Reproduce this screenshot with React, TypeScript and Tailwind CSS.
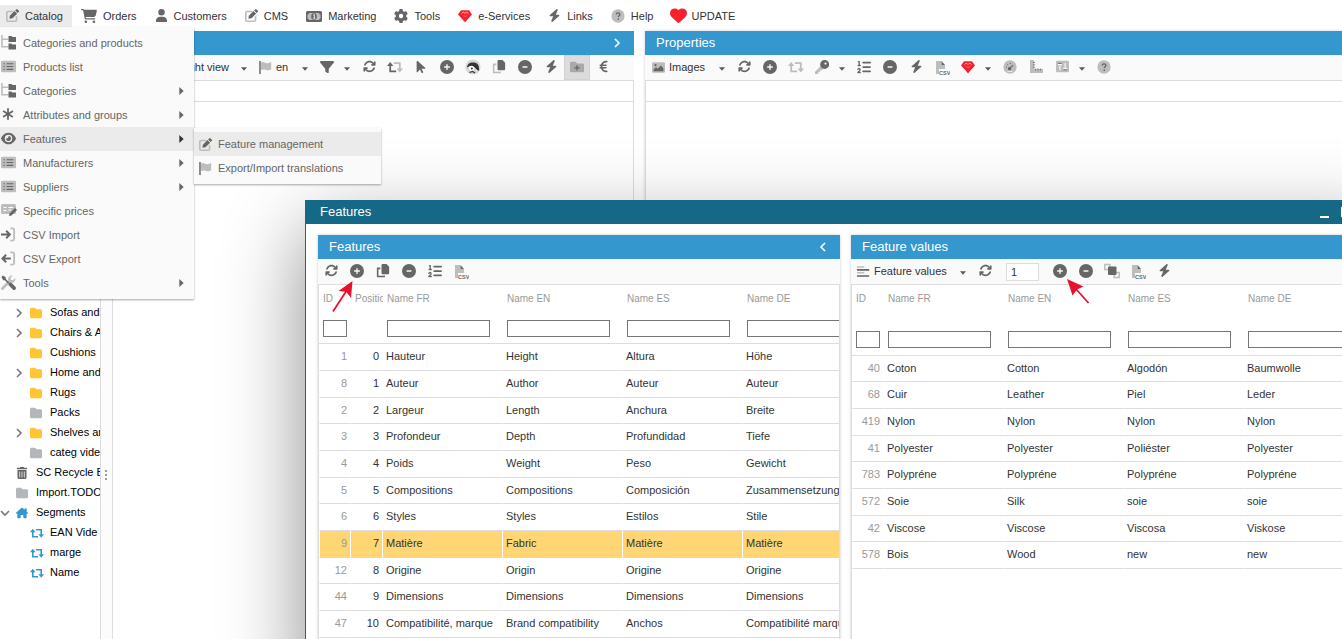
import React from "react";
import {
  FaAsterisk,
  FaArrowPointer,
  FaArrowsRotate,
  FaBolt,
  FaCartShopping,
  FaCircleMinus,
  FaCirclePlus,
  FaEuroSign,
  FaEye,
  FaFilter,
  FaFolder,
  FaGear,
  FaHeart,
  FaHouseChimney,
  FaListOl,
  FaTrashCan,
  FaUser,
} from "react-icons/fa6";

type Children = { children?: React.ReactNode };

/* ---------- two-tone icons, drawn on a 16 unit grid ---------- */

const DARK = "#666666";
const LIGHT = "#bdbdbd";

function Svg({ size = 14, children }: Children & { size?: number }) {
  return (
    <svg width={size} height={size} viewBox="0 0 16 16" fill="none" aria-hidden="true" className="shrink-0">
      {children}
    </svg>
  );
}

const EditIcon = () => (
  <Svg size={13}>
    <path d="M9 3H2.600A1.600 1.600 0 0 0 1 4.600v8.800A1.600 1.600 0 0 0 2.600 15h8.800a1.600 1.600 0 0 0 1.600-1.600V9" stroke={LIGHT} strokeWidth="2" />
    <path d="M4.200 12.100l.5-3.800 5.700-5.800 3.300 3.300-5.700 5.700z" fill={DARK} />
    <path d="M11.200 1.800l1.300-1.300a1.200 1.200 0 0 1 1.700 0l1.400 1.400a1.200 1.200 0 0 1 0 1.700L14.300 4.900z" fill={DARK} />
  </Svg>
);

const MoneyIcon = () => (
  <svg width="16" height="14" viewBox="0 0 16 14" aria-hidden="true">
    <rect x="0" y="2" width="16" height="11" rx="1.500" fill={DARK} />
    <path d="M3 4h10a1.500 1.500 0 0 0 1.500 1.500v4A1.500 1.500 0 0 0 13 11H3a1.500 1.500 0 0 0-1.500-1.500v-4A1.500 1.500 0 0 0 3 4z" fill={LIGHT} />
    <ellipse cx="8" cy="7.500" rx="2.800" ry="3.200" fill={DARK} />
    <path d="M7.300 6.200l1-.6v3.500M7.200 9.200h2" stroke="#fff" strokeWidth=".9" fill="none" />
  </svg>
);

const GemIcon = ({ size = 14 }: { size?: number }) => (
  <Svg size={size}>
    <path d="M3.400 1.500h9.200L16 6.300 8 15 0 6.300z" fill="#f8202c" />
    <path d="M4 5.300l1.800-1.800L8 5l2.200-1.500L12 5.300" stroke="#fff" strokeWidth=".7" />
    <path d="M5.400 7.500L8 8.500l2.600-1" stroke="#ff9aa0" strokeWidth=".6" />
  </Svg>
);

const HelpIcon = () => (
  <Svg size={14}>
    <circle cx="8" cy="8" r="7.600" fill={LIGHT} />
    <path d="M6 6.300c0-1.200.9-1.900 2.100-1.900s2.100.7 2.100 1.800c0 1.400-1.900 1.500-1.900 2.900" stroke={DARK} strokeWidth="1.500" />
    <circle cx="8.300" cy="11.500" r="1" fill={DARK} />
  </Svg>
);

const TreeIcon = () => (
  <Svg size={15}>
    <path d="M1 0v12.500h7M1 4.500h7" stroke={LIGHT} strokeWidth="1.700" />
    <path d="M8 1h3.200l1 1H16v5.500H8zM8 9h3.200l1 1H16v5.500H8z" fill={DARK} />
  </Svg>
);

const ListIcon = () => (
  <Svg size={15}>
    <rect x="0" y="1.800" width="16" height="12.400" rx="1.500" fill={LIGHT} />
    <path d="M6 5h7M6 8h7M6 11h7" stroke={DARK} strokeWidth="1.200" />
    <path d="M2.600 5H4M2.600 8H4M2.600 11H4" stroke={DARK} strokeWidth="1.200" />
  </Svg>
);

const PriceIcon = () => (
  <Svg size={16}>
    <rect x="0" y="2" width="15" height="10" rx="1.500" fill={LIGHT} />
    <path d="M2.500 5.500h2.800M2.500 8.500h2.800M7.500 5.500H12M7.500 8h2.500" stroke="#fff" strokeWidth="1.200" />
    <path d="M8 14l.5-2.500L14 6l2 2-5.500 5.500z" fill={DARK} />
  </Svg>
);

const ImportIcon = () => (
  <Svg size={15}>
    <path d="M10 1.500h2.400A1.600 1.600 0 0 1 14 3.100v9.800a1.600 1.600 0 0 1-1.600 1.600H10" stroke={LIGHT} strokeWidth="2" />
    <path d="M0 8h9M5.500 4l4 4-4 4" stroke={DARK} strokeWidth="2" />
  </Svg>
);

const ExportIcon = () => (
  <Svg size={15}>
    <path d="M10 1.500h2.400A1.600 1.600 0 0 1 14 3.100v9.800a1.600 1.600 0 0 1-1.600 1.600H10" stroke={LIGHT} strokeWidth="2" />
    <path d="M1.500 8h9M5.500 4l-4 4 4 4" stroke={DARK} strokeWidth="2" />
  </Svg>
);

const ToolsIcon = () => (
  <Svg size={15}>
    <path d="M1.500 14.500l7-7" stroke={LIGHT} strokeWidth="3" strokeLinecap="round" />
    <path d="M15.200 3.200l-2.400 2.300-2.300-.4-.4-2.200L12.500.6a4.200 4.200 0 0 0-4.800 5.300l2.400 2.400a4.200 4.200 0 0 0 5.100-5.100z" fill={LIGHT} />
    <path d="M.5 2L2 .5l3 2 .1 1.800 3.700 3.700-1.300 1.300-3.400-3.700-1.800-.1z" fill={DARK} />
    <path d="M10 10l4 4" stroke={DARK} strokeWidth="3.800" strokeLinecap="round" />
  </Svg>
);

const FlagIcon = () => (
  <Svg size={13}>
    <path d="M2.500 2c3-2 5 1.500 8 .7 1.500-.3 3-.8 4.500-1.500v9.300c-3 1.500-5 1-7 .3s-3.500-.5-5.500.4z" fill={LIGHT} />
    <path d="M1.200 0v16" stroke={DARK} strokeWidth="1.800" />
  </Svg>
);

const SwapIcon = ({ first = DARK, second = LIGHT, size = 16 }: { first?: string; second?: string; size?: number }) => (
  <Svg size={size}>
    <path d="M9.200 12.300H3.200V5.500" stroke={first} strokeWidth="1.800" />
    <path d="M0 7l3.200-4 3.200 4z" fill={first} />
    <path d="M6.800 4.200h6v6.500" stroke={second} strokeWidth="1.800" />
    <path d="M9.600 9.500H16l-3.200 4z" fill={second} />
  </Svg>
);

const PrestaIcon = () => (
  <Svg size={16}>
    <circle cx="8" cy="8" r="7.600" fill="#d6d6d6" />
    <path d="M2 8.500C2.500 4 6 3 9 3.500c4 .5 5.500 3.500 5 8l-3-.5-1.500-3L5 7z" fill="#333" />
    <circle cx="6.500" cy="9.300" r="2.600" fill="#fff" />
    <circle cx="6.900" cy="9.500" r="1" fill="#333" />
    <path d="M4.500 13.500l3-1 2.500 1.500M12 9l2 2" stroke="#333" strokeWidth="1.300" />
    <path d="M10.500 9.500l1.500 2.500" stroke="#fff" strokeWidth="1" />
  </Svg>
);

const CopyIcon = ({ back = LIGHT }: { back?: string }) => (
  <Svg size={14}>
    <path d="M5 5H1.900v9.200h7.400V13" stroke={back} strokeWidth="1.800" />
    <path d="M7.500 0H12l3 3v7.500a1.200 1.200 0 0 1-1.200 1.200H7.500a1.200 1.200 0 0 1-1.200-1.200V1.200A1.200 1.200 0 0 1 7.500 0z" fill={DARK} />
  </Svg>
);

const FolderPlusIcon = () => (
  <Svg size={14}>
    <path d="M1.500 2h4.700l2 2h6.300A1.500 1.500 0 0 1 16 5.500v7a1.500 1.500 0 0 1-1.500 1.500h-13A1.500 1.500 0 0 1 0 12.500v-9A1.500 1.500 0 0 1 1.500 2z" fill="#a9a9a9" />
    <path d="M8 6v6M5 9h6" stroke={DARK} strokeWidth="1.500" />
  </Svg>
);

const ImageIcon = () => (
  <Svg size={13}>
    <rect x="0" y="1.500" width="16" height="13" rx="1.500" fill={LIGHT} />
    <path d="M2 12.500V10.500L5 7.500l2 2 4-4 3 3.500v3.500z" fill={DARK} />
    <circle cx="4.300" cy="5" r="1.400" fill={DARK} />
  </Svg>
);

const KeyIcon = () => (
  <Svg size={14}>
    <path d="M7.500 6L0 13.500V16h3.500v-2h2v-2h2L10 9z" fill={LIGHT} />
    <path fillRule="evenodd" d="M11 0a5 5 0 1 1 0 10.200A5 5 0 0 1 11 0zm1 2.800a1.300 1.300 0 1 0 0 2.600 1.300 1.300 0 0 0 0-2.600z" fill={DARK} />
  </Svg>
);

const CsvIcon = () => (
  <svg width="16" height="15" viewBox="0 0 16 15" aria-hidden="true" className="mt-px">
    <path d="M2 1h5.500v4H11v4H5v5H2z" fill={LIGHT} />
    <path d="M7.500 1L11 5H7.500z" fill={DARK} />
    <text x="5" y="14.500" fontSize="5.500" fontWeight="700" fontFamily="Liberation Sans" fill={DARK}>CSV</text>
  </svg>
);

const GaugeIcon = () => (
  <Svg size={14}>
    <circle cx="8" cy="8" r="7.600" fill={LIGHT} />
    <path d="M7.500 9.500L11.500 6M3.500 8h1M5 4.800l.6.6M8.500 3.500v1" stroke={DARK} strokeWidth="1.200" />
    <circle cx="7.500" cy="10" r="2" fill={DARK} />
    <path d="M5 13h6" stroke="#eee" strokeWidth="1" />
  </Svg>
);

const RulerIcon = () => (
  <Svg size={13}>
    <path d="M0 0h5v11h11v5H0z" fill={LIGHT} />
    <path d="M3.500 3H6M3.500 6H6M3.500 9H6M7 10.500V13M10 10.500V13M13 10.500V13" stroke={DARK} strokeWidth="1" />
  </Svg>
);

const SlidersIcon = () => (
  <Svg size={13}>
    <rect x="0" y="1" width="16" height="14" rx="1.500" fill={LIGHT} />
    <path d="M2.500 6.500V4H7v2.500zM9 12V9.500h4.500V12z" fill="#fff" />
    <path d="M4.800 7v5.500M11.200 9V4" stroke="#fff" strokeWidth="1.300" />
    <path d="M2.500 4.200H7M9 12h4.500" stroke={DARK} strokeWidth="1.200" />
  </Svg>
);

const LinesIcon = () => (
  <Svg size={13}>
    <path d="M0 2.500h9M0 9.500h9" stroke={LIGHT} strokeWidth="1.900" />
    <path d="M0 6h15M0 13.500h15" stroke={DARK} strokeWidth="1.900" />
  </Svg>
);

const LayersIcon = () => (
  <Svg size={16}>
    <path d="M.8 1.500h5v5h-5zM10.200 9.500h5v5h-5z" stroke={LIGHT} strokeWidth="1.500" />
    <rect x="4" y="3.500" width="8.500" height="8.500" rx="1" fill={DARK} />
  </Svg>
);

const Chevron = ({ d }: { d: string }) => (
  <svg width="10" height="10" viewBox="0 0 10 10" fill="none" stroke="currentColor" strokeWidth="1.600" aria-hidden="true">
    <path d={d} />
  </svg>
);
const RIGHT = "M3 1l4 4-4 4";
const LEFT = "M7 1L3 5l4 4";
const DOWN = "M1 3l4 4 4-4";

/* ---------- toolbar parts ---------- */

function Tool({ label, children, active = false }: Children & { label: string; active?: boolean }) {
  return (
    <button
      type="button"
      aria-label={label}
      className={
        "flex w-[26px] shrink-0 items-center justify-center self-stretch pb-[2px] text-[14px] text-[#666] " +
        (active ? "border border-[#d2d2d2] bg-[#dcdcdc]" : "")
      }
    >
      {children}
    </button>
  );
}

function Caret({ label }: { label: string }) {
  return (
    <button type="button" aria-label={label} className="flex w-4 shrink-0 items-center justify-start self-stretch pt-[2px] pl-1">
      <svg width="6" height="4" viewBox="0 0 6 4" aria-hidden="true">
        <path d="M0 .3h6L3 3.700z" fill="#4c5c68" />
      </svg>
    </button>
  );
}

function Toolbar({ children }: Children) {
  return <div className="flex h-[25px] shrink-0 items-center overflow-hidden bg-[#fafafa]">{children}</div>;
}

function PanelTitle({ title, chevron }: { title: string; chevron?: string }) {
  return (
    <header className="flex h-6 shrink-0 items-center justify-between bg-[#3498ce] pr-3 pl-[11px] text-white">
      <h2 className="text-[13px] leading-6">{title}</h2>
      {chevron && (
        <button type="button" aria-label={"Toggle panel " + title}>
          <Chevron d={chevron} />
        </button>
      )}
    </header>
  );
}

/* ---------- menus ---------- */

const topMenu = [
  { label: "Orders", icon: <FaCartShopping size={16} /> },
  { label: "Customers", icon: <FaUser size={13} /> },
  { label: "CMS", icon: <EditIcon /> },
  { label: "Marketing", icon: <MoneyIcon /> },
  { label: "Tools", icon: <FaGear size={14} /> },
  { label: "e-Services", icon: <GemIcon /> },
  { label: "Links", icon: <FaBolt size={13} /> },
  { label: "Help", icon: <HelpIcon /> },
];

function MenuBar() {
  return (
    <nav className="flex h-[31px] shrink-0 items-center whitespace-nowrap text-[#333]">
      <a href="#catalog" className="flex h-[22px] items-center gap-[6px] bg-[#ebebeb] pr-[9px] pl-[6px]">
        <EditIcon />
        Catalog
      </a>
      {topMenu.map((m) => (
        <a key={m.label} href={"#" + m.label} className="flex h-[22px] items-center gap-[6px] px-[9px]">
          <span className="text-[#666]">{m.icon}</span>
          {m.label}
        </a>
      ))}
      <a href="#update" className="flex h-[22px] items-center gap-1 px-2">
        <FaHeart size={17} color="#f8202c" />
        UPDATE
      </a>
    </nav>
  );
}

const catalogMenu = [
  { label: "Categories and products", icon: <TreeIcon /> },
  { label: "Products list", icon: <ListIcon /> },
  { label: "Categories", icon: <TreeIcon />, sub: true },
  { label: "Attributes and groups", icon: <FaAsterisk size={14} />, sub: true },
  { label: "Features", icon: <FaEye size={15} />, sub: true, active: true },
  { label: "Manufacturers", icon: <ListIcon />, sub: true },
  { label: "Suppliers", icon: <ListIcon />, sub: true },
  { label: "Specific prices", icon: <PriceIcon /> },
  { label: "CSV Import", icon: <ImportIcon /> },
  { label: "CSV Export", icon: <ExportIcon /> },
  { label: "Tools", icon: <ToolsIcon />, sub: true },
];

function CatalogMenu() {
  return (
    <ul className="absolute top-[27px] left-0 w-[194px] bg-[#fafafa] py-1 text-[#666] shadow-[0_1px_2px_rgba(0,0,0,0.35)]">
      {catalogMenu.map((m) => (
        <li key={m.label}>
          <a href={"#" + m.label} className={"flex h-6 items-center pr-[10px] " + (m.active ? "bg-[#ebebeb]" : "")}>
            <span className="flex w-[23px] shrink-0 items-center pb-[2px] pl-px">{m.icon}</span>
            <span className="flex-1">{m.label}</span>
            {m.sub && (
              <svg width="5" height="8" viewBox="0 0 5 8" aria-hidden="true">
                <path d="M.3 0L4.700 4 .3 8z" fill={m.active ? "#333" : "#666"} />
              </svg>
            )}
          </a>
        </li>
      ))}
    </ul>
  );
}

function FeaturesSubmenu() {
  return (
    <ul className="absolute top-[128px] left-[194px] w-[187px] bg-[#fafafa] py-1 text-[#666] shadow-[0_1px_2px_rgba(0,0,0,0.35)]">
      <li>
        <a href="#manage" className="flex h-6 items-center gap-[6px] bg-[#ebebeb] pl-[5px]">
          <EditIcon />
          Feature management
        </a>
      </li>
      <li>
        <a href="#translations" className="flex h-6 items-center gap-[6px] pl-[5px]">
          <FlagIcon />
          Export/Import translations
        </a>
      </li>
    </ul>
  );
}

/* ---------- category tree ---------- */

const yellow = <FaFolder size={12} color="#ffc533" />;
const grey = <FaFolder size={12} color="#b3b6ba" />;
const segment = <SwapIcon first="#3498ce" second="#3498ce" size={14} />;

const tree = [
  { label: "Sofas and", icon: yellow, nested: true, chevron: RIGHT },
  { label: "Chairs & Armchairs", icon: yellow, nested: true, chevron: RIGHT },
  { label: "Cushions", icon: yellow, nested: true },
  { label: "Home and", icon: yellow, nested: true, chevron: RIGHT },
  { label: "Rugs", icon: yellow, nested: true },
  { label: "Packs", icon: grey, nested: true },
  { label: "Shelves and", icon: yellow, nested: true, chevron: RIGHT },
  { label: "categ vide", icon: grey, nested: true },
  { label: "SC Recycle Bin", icon: <FaTrashCan size={12} color="#666" /> },
  { label: "Import.TODO", icon: grey },
  { label: "Segments", icon: <FaHouseChimney size={12} color="#3498ce" />, chevron: DOWN },
  { label: "EAN Vide", icon: segment, nested: true },
  { label: "marge", icon: segment, nested: true },
  { label: "Name", icon: segment, nested: true },
];

function TreePanel() {
  return (
    <aside className="flex w-[101px] shrink-0 flex-col overflow-hidden border-r border-[#ddd]">
      <PanelTitle title="" />
      <Toolbar />
      <ul className="pt-[222px] text-black">
        {tree.map((t) => (
          <li key={t.label} className={"flex h-5 items-center whitespace-nowrap " + (t.nested ? "pl-[14px]" : "")}>
            <span className="flex w-4 shrink-0 pt-px text-[#777]">{t.chevron && <Chevron d={t.chevron} />}</span>
            <span className="w-5 shrink-0 pt-[2px]">{t.icon}</span>
            {t.label}
          </li>
        ))}
      </ul>
    </aside>
  );
}

/* ---------- background panels ---------- */

function ProductsPanel() {
  return (
    <section className="flex min-w-0 flex-1 flex-col">
      <PanelTitle title="" chevron={RIGHT} />
      <Toolbar>
        <button type="button" className="flex w-[125px] shrink-0 justify-end pr-2 pb-px text-[#333]">Light view</button>
        <Caret label="View options" />
        <button type="button" className="flex w-[45px] shrink-0 items-center gap-1 pb-px pl-[6px] text-[#333]">
          <FlagIcon />
          en
        </button>
        <Caret label="Languages" />
        <Tool label="Filter"><FaFilter size={14} /></Tool>
        <Caret label="Filter options" />
        <Tool label="Refresh"><FaArrowsRotate size={13} /></Tool>
        <Tool label="Synchronise"><SwapIcon /></Tool>
        <Tool label="Select"><FaArrowPointer /></Tool>
        <Tool label="Add"><FaCirclePlus /></Tool>
        <Tool label="Add in PrestaShop"><PrestaIcon /></Tool>
        <Tool label="Duplicate"><CopyIcon /></Tool>
        <Tool label="Delete"><FaCircleMinus /></Tool>
        <Tool label="Quick actions"><FaBolt size={13} /></Tool>
        <Tool label="Add to category" active><FolderPlusIcon /></Tool>
        <Tool label="Currency"><FaEuroSign size={13} /></Tool>
      </Toolbar>
      <div className="flex-1 border border-b-0 border-[#ddd]">
        <div className="h-[21px] border-b border-[#ddd]" />
      </div>
    </section>
  );
}

function PropertiesPanel() {
  return (
    <section className="flex min-w-0 flex-1 flex-col shadow-[0_0_3px_rgba(0,0,0,0.2)]">
      <PanelTitle title="Properties" />
      <Toolbar>
        <button type="button" className="flex w-[70px] shrink-0 items-center gap-1 pb-px pl-[7px] text-[#333]">
          <ImageIcon />
          Images
        </button>
        <Caret label="Property groups" />
        <Tool label="Refresh"><FaArrowsRotate size={13} /></Tool>
        <Tool label="Add"><FaCirclePlus /></Tool>
        <Tool label="Synchronise"><SwapIcon first={LIGHT} /></Tool>
        <Tool label="Keys"><KeyIcon /></Tool>
        <Caret label="Key options" />
        <Tool label="Positions"><FaListOl size={14} /></Tool>
        <Tool label="Delete"><FaCircleMinus /></Tool>
        <Tool label="Quick actions"><FaBolt size={13} /></Tool>
        <Tool label="Export CSV"><CsvIcon /></Tool>
        <Tool label="e-Services"><GemIcon size={14} /></Tool>
        <Caret label="e-Services options" />
        <Tool label="Performance"><GaugeIcon /></Tool>
        <Tool label="Dimensions"><RulerIcon /></Tool>
        <Tool label="Layout"><SlidersIcon /></Tool>
        <Caret label="Layout options" />
        <Tool label="Help"><HelpIcon /></Tool>
      </Toolbar>
      <div className="flex-1 border-t border-l border-[#ddd] bg-white">
        <div className="h-[21px] border-b border-[#ddd]" />
      </div>
    </section>
  );
}

/* ---------- features window ---------- */

const languages = ["Name FR", "Name EN", "Name ES", "Name DE"];

const features: [number, string[]][] = [
  [1, ["Hauteur", "Height", "Altura", "Höhe"]],
  [8, ["Auteur", "Author", "Auteur", "Auteur"]],
  [2, ["Largeur", "Length", "Anchura", "Breite"]],
  [3, ["Profondeur", "Depth", "Profundidad", "Tiefe"]],
  [4, ["Poids", "Weight", "Peso", "Gewicht"]],
  [5, ["Compositions", "Compositions", "Composición", "Zusammensetzung"]],
  [6, ["Styles", "Styles", "Estilos", "Stile"]],
  [9, ["Matière", "Fabric", "Matière", "Matière"]],
  [12, ["Origine", "Origin", "Origine", "Origine"]],
  [44, ["Dimensions", "Dimensions", "Dimensions", "Dimensions"]],
  [47, ["Compatibilité, marque", "Brand compatibility", "Anchos", "Compatibilité marque"]],
];

const values: [number, string[]][] = [
  [40, ["Coton", "Cotton", "Algodón", "Baumwolle"]],
  [68, ["Cuir", "Leather", "Piel", "Leder"]],
  [419, ["Nylon", "Nylon", "Nylon", "Nylon"]],
  [41, ["Polyester", "Polyester", "Poliéster", "Polyester"]],
  [783, ["Polypréne", "Polypréne", "Polypréne", "Polypréne"]],
  [572, ["Soie", "Silk", "soie", "soie"]],
  [42, ["Viscose", "Viscose", "Viscosa", "Viskose"]],
  [578, ["Bois", "Wood", "new", "new"]],
];

function Grid({
  rows,
  positions = false,
  selected,
  filterCell,
  rowHeight,
}: {
  rows: [number, string[]][];
  positions?: boolean;
  selected?: number;
  filterCell: string;
  rowHeight: string;
}) {
  const cell = "border-r border-b border-r-white pt-0 pb-[2px] ";
  const filterInput = "block h-[17px] border border-[#767676] bg-white px-1 ";
  return (
    <div className="flex-1 overflow-hidden border border-[#ddd] bg-white">
      <table className={"table-fixed border-separate border-spacing-0 whitespace-nowrap " + (positions ? "w-[544px]" : "w-[512px]")}>
        <colgroup>
          <col className="w-8" />
          {positions && <col className="w-8" />}
          {languages.map((l) => (
            <col key={l} className="w-[120px]" />
          ))}
        </colgroup>
        <thead className="text-left text-[10px] text-[#999]">
          <tr className="h-[29px]">
            <th className="overflow-hidden pt-0 pr-0 pb-[2px] pl-1 font-normal">ID</th>
            {positions && <th className="overflow-hidden pt-0 pr-0 pb-[2px] pl-1 font-normal">Position</th>}
            {languages.map((l) => (
              <th key={l} className="pt-0 pr-0 pb-[2px] pl-1 font-normal">{l}</th>
            ))}
          </tr>
          <tr>
            <td className={"border-b border-[#ddd] px-1 " + filterCell}>
              <input aria-label="Filter ID" className={filterInput + "w-6"} />
            </td>
            {positions && <td className="border-b border-[#ddd] p-0" />}
            {languages.map((l) => (
              <td key={l} className={"border-b border-[#ddd] px-1 " + filterCell}>
                <input aria-label={"Filter " + l} className={filterInput + "w-[103px]"} />
              </td>
            ))}
          </tr>
        </thead>
        <tbody>
          {rows.map(([id, names], i) => {
            const tone = id === selected ? "border-b-[#ffd673] bg-[#ffd673] " : "border-b-[#ddd] ";
            return (
              <tr key={id} className={rowHeight}>
                <td className={cell + tone + "border-l border-l-white pr-[3px] pl-0 text-right text-[#999]"}>{id}</td>
                {positions && <td className={cell + tone + "pr-[3px] pl-0 text-right"}>{i}</td>}
                {names.map((n, k) => (
                  <td key={k} className={cell + tone + "pr-0 pl-[3px]"}>{n}</td>
                ))}
              </tr>
            );
          })}
        </tbody>
      </table>
    </div>
  );
}

function FeaturesWindow() {
  return (
    <section className="absolute top-[200px] -right-[50px] -bottom-10 left-[305px] flex flex-col border-l border-[#166887] bg-white shadow-[0_30px_75px_rgba(0,0,0,0.45)]">
      <header className="flex h-6 shrink-0 items-center gap-3 bg-[#166887] pr-[17px] pl-[14px] text-white">
        <h1 className="flex-1 text-[13px]">Features</h1>
        <button type="button" aria-label="Minimise" className="h-3 w-[9px] border-b-2 border-white" />
        <button type="button" aria-label="Maximise" className="h-[10px] w-[10px] border border-t-2 border-white" />
        <button type="button" aria-label="Close" className="w-3 leading-3">×</button>
      </header>

      <div className="flex min-h-0 flex-1 gap-[11px] pt-[11px] pr-3 pl-3">
        <section className="flex w-[522px] shrink-0 flex-col shadow-[0_0_3px_rgba(0,0,0,0.2)]">
          <PanelTitle title="Features" chevron={LEFT} />
          <Toolbar>
            <Tool label="Refresh"><FaArrowsRotate size={13} /></Tool>
            <Tool label="Add feature"><FaCirclePlus /></Tool>
            <Tool label="Duplicate"><CopyIcon back={DARK} /></Tool>
            <Tool label="Delete"><FaCircleMinus /></Tool>
            <Tool label="Positions"><FaListOl size={14} /></Tool>
            <Tool label="Export CSV"><CsvIcon /></Tool>
          </Toolbar>
          <Grid rows={features} positions selected={9} filterCell="pt-[6px] pb-[6px]" rowHeight="h-[27px] nth-[3n]:h-[26px]" />
        </section>

        <section className="flex min-w-0 flex-1 flex-col shadow-[0_0_3px_rgba(0,0,0,0.2)]">
          <PanelTitle title="Feature values" />
          <Toolbar>
            <button type="button" className="flex w-[105px] shrink-0 items-center gap-1 pb-px pl-[6px] text-[#333]">
              <LinesIcon />
              Feature values
            </button>
            <Caret label="Value lists" />
            <Tool label="Refresh"><FaArrowsRotate size={13} /></Tool>
            <input aria-label="Number of values" defaultValue="1" className="mx-2 h-[18px] w-[33px] shrink-0 border border-[#ddd] bg-white px-1" />
            <Tool label="Add value"><FaCirclePlus /></Tool>
            <Tool label="Delete value"><FaCircleMinus /></Tool>
            <Tool label="Merge"><LayersIcon /></Tool>
            <Tool label="Export CSV"><CsvIcon /></Tool>
            <Tool label="Quick actions"><FaBolt size={13} /></Tool>
          </Toolbar>
          <Grid rows={values} filterCell="pt-[17px] pb-[7px]" rowHeight="h-[27px] nth-[3n+1]:h-[26px]" />
        </section>
      </div>

      <svg className="absolute top-[80px] left-[26px]" width="22" height="33" viewBox="0 0 22 33" aria-hidden="true">
        <path d="M1 31.500L15 10" stroke="#e8112d" strokeWidth="1.800" />
        <path d="M20.500 1L6.500 11l7.500.7 5 6z" fill="#e8112d" />
      </svg>
      <svg className="absolute top-[78px] left-[760px]" width="24" height="27" viewBox="0 0 24 27" aria-hidden="true">
        <path d="M22.500 25L10 11" stroke="#e8112d" strokeWidth="1.800" />
        <path d="M1 1l16.500 7.500-6.500 3-4.500 6z" fill="#e8112d" />
      </svg>
    </section>
  );
}

export default function App() {
  return (
    <div className="relative flex h-screen flex-col overflow-hidden bg-white font-['Liberation_Sans',Arial,sans-serif] text-[11px] leading-4 text-[#333]">
      <MenuBar />
      <main className="grid min-h-0 flex-1 grid-cols-[634fr_697fr] gap-[11px]">
        <div className="flex min-w-0">
          <TreePanel />
          <div className="flex w-[11px] shrink-0 items-center justify-center bg-[#fcfcfc]">
            <svg width="3" height="10" viewBox="0 0 3 10" fill="#999" className="mt-[280px]" aria-hidden="true">
              <path d="M0 0h2v2H0zM0 4h2v2H0zM0 8h2v2H0z" />
            </svg>
          </div>
          <ProductsPanel />
        </div>
        <PropertiesPanel />
      </main>
      <FeaturesWindow />
      <CatalogMenu />
      <FeaturesSubmenu />
    </div>
  );
}
